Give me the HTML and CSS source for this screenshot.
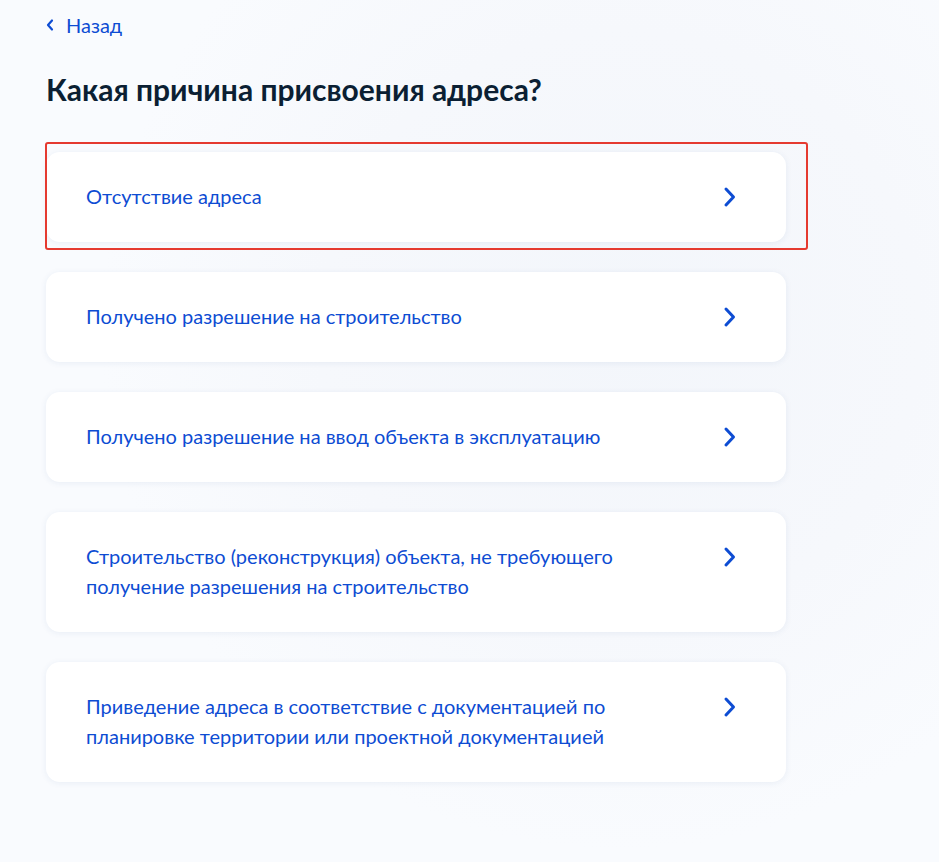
FILE: index.html
```html
<!DOCTYPE html>
<html lang="ru">
<head>
<meta charset="utf-8">
<title>Какая причина присвоения адреса?</title>
<link rel="stylesheet" href="styles.css">
</head>
<body>
<main class="page">
  <a class="back" href="#">
    <svg class="back-icon" width="8" height="14" viewBox="0 0 8 14"><path d="M6 2.5 L2 7 L6 11.5" fill="none" stroke="#0d4cd3" stroke-width="2.2" stroke-linecap="round" stroke-linejoin="round"/></svg>
    <span>Назад</span>
  </a>
  <h1 class="title">Какая причина присвоения адреса?</h1>
  <ul class="options">
    <li class="option option-selected">
      <span class="option-text">Отсутствие адреса</span>
      <svg class="chevron" width="14" height="22" viewBox="0 0 14 22"><path d="M3 3 L10.5 11 L3 19" fill="none" stroke="#0d4cd3" stroke-width="3" stroke-linecap="round" stroke-linejoin="round"/></svg>
      <span class="highlight"></span>
    </li>
    <li class="option">
      <span class="option-text">Получено разрешение на строительство</span>
      <svg class="chevron" width="14" height="22" viewBox="0 0 14 22"><path d="M3 3 L10.5 11 L3 19" fill="none" stroke="#0d4cd3" stroke-width="3" stroke-linecap="round" stroke-linejoin="round"/></svg>
    </li>
    <li class="option">
      <span class="option-text">Получено разрешение на ввод объекта в эксплуатацию</span>
      <svg class="chevron" width="14" height="22" viewBox="0 0 14 22"><path d="M3 3 L10.5 11 L3 19" fill="none" stroke="#0d4cd3" stroke-width="3" stroke-linecap="round" stroke-linejoin="round"/></svg>
    </li>
    <li class="option">
      <span class="option-text">Строительство (реконструкция) объекта, не требующего<br>получение разрешения на строительство</span>
      <svg class="chevron" width="14" height="22" viewBox="0 0 14 22"><path d="M3 3 L10.5 11 L3 19" fill="none" stroke="#0d4cd3" stroke-width="3" stroke-linecap="round" stroke-linejoin="round"/></svg>
    </li>
    <li class="option">
      <span class="option-text">Приведение адреса в соответствие с документацией по<br>планировке территории или проектной документацией</span>
      <svg class="chevron" width="14" height="22" viewBox="0 0 14 22"><path d="M3 3 L10.5 11 L3 19" fill="none" stroke="#0d4cd3" stroke-width="3" stroke-linecap="round" stroke-linejoin="round"/></svg>
    </li>
  </ul>
</main>
</body>
</html>
```

FILE: styles.css
```css
html, body {
  margin: 0;
  padding: 0;
}
body {
  background: radial-gradient(circle at 620px 330px, #f3f6fb 0, #f6f8fc 300px, #f9fbfe 520px);
  min-height: 862px;
  font-family: Lato, "Noto Sans", sans-serif;
  color: #0b1f33;
}
.page {
  padding: 13px 0 0 46px;
}
.back {
  display: inline-flex;
  align-items: center;
  gap: 12px;
  color: #0d4cd3;
  text-decoration: none;
  font-size: 20px;
  line-height: 24px;
}
.back-icon {
  display: block;
}
.title {
  margin: 33px 0 44px;
  font-size: 30px;
  line-height: 38px;
  font-weight: 700;
  color: #0b1f33;
}
.options {
  list-style: none;
  margin: 0;
  padding: 0;
  display: flex;
  flex-direction: column;
  gap: 30px;
  width: 740px;
}
.option {
  position: relative;
  display: flex;
  align-items: flex-start;
  justify-content: space-between;
  background: #fff;
  border-radius: 14px;
  padding: 29px 49px 31px 40px;
  box-shadow: 0 1px 6px rgba(44, 80, 140, 0.08);
}
.option-text {
  font-size: 20px;
  line-height: 30px;
  color: #0d4cd3;
}
.chevron {
  display: block;
  margin-top: 5px;
  flex-shrink: 0;
}
.highlight {
  position: absolute;
  left: -1px;
  top: -10px;
  width: 763px;
  height: 108px;
  border: 2px solid #e53a30;
  border-radius: 3px;
  box-sizing: border-box;
  pointer-events: none;
}
```
